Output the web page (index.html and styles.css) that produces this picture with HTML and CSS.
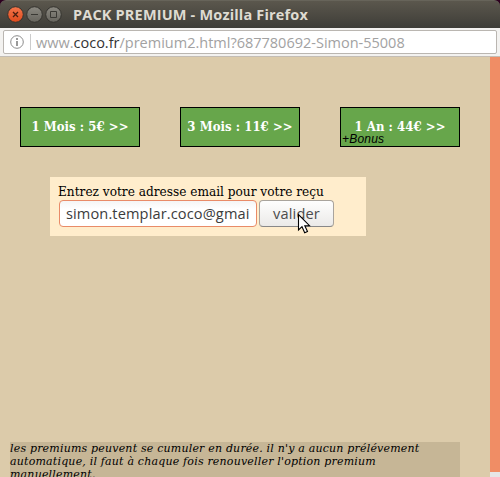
FILE: index.html
```html
<!DOCTYPE html>
<html lang="fr">
<head>
<meta charset="utf-8">
<title>PACK PREMIUM</title>
<link rel="stylesheet" href="styles.css">
</head>
<body>
<div class="window">
  <header class="titlebar">
    <svg class="controls" width="56" height="18" viewBox="0 0 56 18">
      <defs>
        <linearGradient id="red" x1="0" y1="0" x2="0" y2="1"><stop offset="0" stop-color="#f4764b"/><stop offset="1" stop-color="#df4a1c"/></linearGradient>
        <linearGradient id="gray" x1="0" y1="0" x2="0" y2="1"><stop offset="0" stop-color="#8b8981"/><stop offset="1" stop-color="#66645d"/></linearGradient>
      </defs>
      <g stroke="#34332e">
        <circle cx="8.5" cy="8.5" r="7.8" fill="url(#red)"/>
        <circle cx="27.5" cy="8.5" r="7.8" fill="url(#gray)"/>
        <circle cx="46.5" cy="8.5" r="7.8" fill="url(#gray)"/>
      </g>
      <path d="M6 6l5 5M11 6l-5 5" stroke="#4a1f10" stroke-width="1.3"/>
      <path d="M24 8.5h7M43.5 5.5h6v6h-6z" fill="none" stroke="#3a3934"/>
    </svg>
    <span class="title">PACK PREMIUM - Mozilla Firefox</span>
  </header>
  <div class="toolbar">
    <div class="address">
      <svg class="info" width="14" height="14" viewBox="0 0 14 14">
        <circle cx="7" cy="7" r="6.3" fill="none" stroke="#8c8c8c"/>
        <path d="M7 3v2M7 6v5" stroke="#808080" stroke-width="1.6"/>
      </svg>
      <span class="divider"></span>
      <span class="url">www.<b>coco.fr</b>/premium2.html?687780692-Simon-55008</span>
    </div>
  </div>
  <main class="page">
    <div class="content">
      <div class="offers">
        <a class="offer">1 Mois : 5€ &gt;&gt;</a>
        <a class="offer">3 Mois : 11€ &gt;&gt;</a>
        <a class="offer">1 An : 44€ &gt;&gt;<span class="bonus">+Bonus</span></a>
      </div>
      <div class="form">
        <div class="label">Entrez votre adresse email pour votre reçu</div>
        <div class="fields">
          <div class="email"><span>simon.templar.coco@gmai</span></div>
          <div class="submit"><span>valider</span>
            <svg class="cursor" width="14" height="21" viewBox="0 0 14 21"><path d="M1.5 1.5v15.5l3.5-3.3 2.7 6 2.8-1.2-2.7-5.8h4.7z" fill="#fff" stroke="#000" stroke-width="1.1"/></svg>
          </div>
        </div>
      </div>
      <p class="note">les premiums peuvent se cumuler en durée. il n'y a aucun prélévement<br>automatique, il faut à chaque fois renouveller l'option premium<br>manuellement.</p>
    </div>
    <div class="scrollbar"><div class="thumb"></div></div>
  </main>
</div>
</body>
</html>
```
FILE: styles.css
```css
* { box-sizing: border-box; }
body { margin: 0; background: #2c001e; }
.window { width: 500px; height: 477px; overflow: hidden; display: flex; flex-direction: column; }
.titlebar { height: 28px; flex: none; display: flex; align-items: center; padding-left: 7px; border-radius: 6px 6px 0 0; background: linear-gradient(#5b574d, #3e3d38); border-top: 1px solid #67645a; }
.controls { flex: none; }
.title { margin-left: 10px; font: bold 14.5px/20px "Open Sans", sans-serif; color: #dfdbd2; white-space: nowrap; letter-spacing: 0.17px; }
.toolbar { height: 29px; flex: none; background: #f3f2f0; padding: 2px 3px; border-bottom: 1px solid #c3bdb5; }
.address { height: 24px; border: 1px solid #bab6b1; border-radius: 2px; background: #fff; display: flex; align-items: center; padding-left: 6px; }
.divider { width: 1px; height: 16px; background: #ccc; margin: 0 5px 0 6px; }
.url { font: 14.5px/20px "Open Sans", sans-serif; color: #a2a2a2; white-space: nowrap; padding-top: 1px; }
.url b { font-weight: normal; color: #333; }
.page { flex: 1; min-height: 0; display: flex; background: #dccbaa; }
.content { width: 490px; height: 420px; padding: 50px 30px 0 10px; display: flex; flex-direction: column; overflow: hidden; }
.offers { display: flex; gap: 40px; margin-left: 10px; flex: none; }
.offer { width: 120px; height: 40px; border: 1px solid #000; background: #67a64b; color: #fff; font: bold 13px/38px "DejaVu Serif Condensed", "DejaVu Serif", serif; text-align: center; white-space: nowrap; position: relative; letter-spacing: 0.05px; }
.bonus { position: absolute; left: 1px; bottom: 0; font: italic 12px/14px "Liberation Sans", sans-serif; color: #000; letter-spacing: 0.2px; }
.form { flex: none; width: 316px; height: 59px; margin: 30px 0 0 40px; padding: 7px 8px; background: #ffedcc; }
.label { font: 13.5px/15px "DejaVu Serif Condensed", "DejaVu Serif", serif; white-space: nowrap; }
.fields { display: flex; gap: 2px; padding: 1px 0 0 1px; }
.email, .submit { height: 27px; border-radius: 4px; font: 14.6px/25px "Open Sans", sans-serif; color: #3c3c3c; white-space: nowrap; }
.email { width: 198px; border: 1px solid #e98b68; padding-left: 6px; background: linear-gradient(#f5f5f5, #fff 8px); letter-spacing: 0.11px; }
.submit { width: 75px; border: 1px solid #a9a49d; border-bottom-color: #888; background: linear-gradient(#fefefe, #ebeae8); text-align: center; position: relative; color: #4c4c4c; letter-spacing: 0.15px; }
.cursor { position: absolute; left: 37px; top: 12px; }
.note { flex: none; width: 450px; margin: 206px 0 0; background: #c6b696; font: italic 11px/13px "DejaVu Serif", serif; white-space: nowrap; letter-spacing: 0.19px; }
.scrollbar { width: 10px; background: #e6e6e6; }
.thumb { height: 415px; background: #f08d65; }
```
